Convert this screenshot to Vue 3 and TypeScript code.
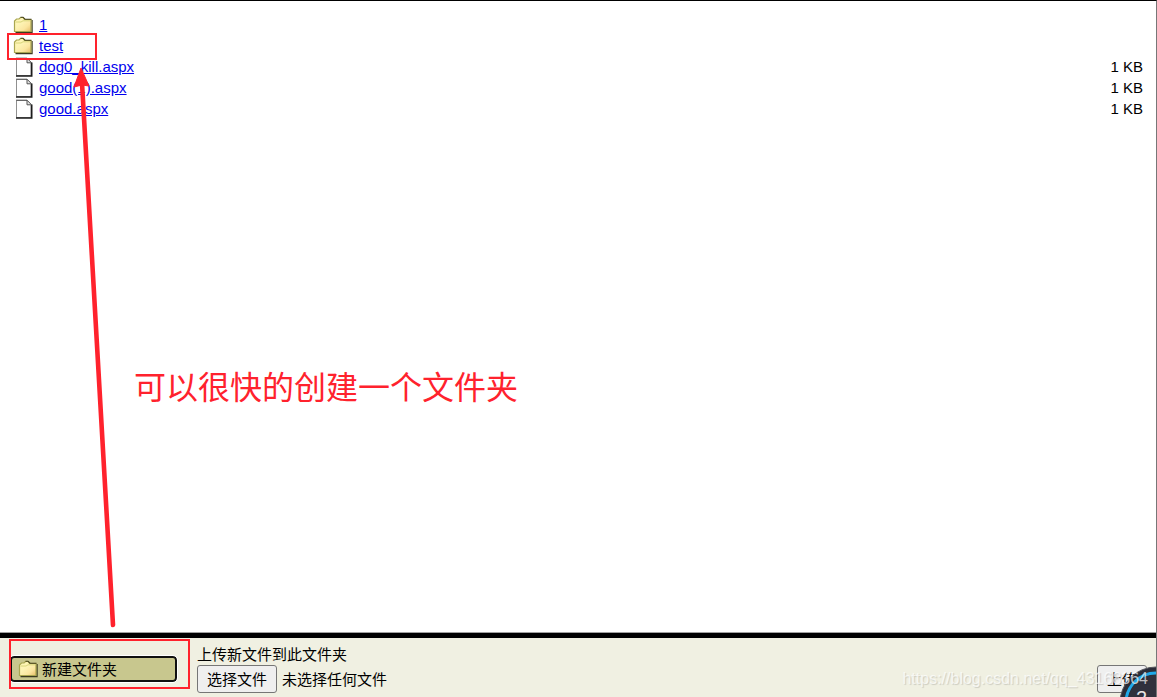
<script setup lang="ts">
import { ref } from 'vue'

interface Entry {
  name: string
  kind: 'folder' | 'file'
  size: string
}

const entries: Entry[] = [
  { name: '1', kind: 'folder', size: '' },
  { name: 'test', kind: 'folder', size: '' },
  { name: 'dog0_kill.aspx', kind: 'file', size: '1 KB' },
  { name: 'good(1).aspx', kind: 'file', size: '1 KB' },
  { name: 'good.aspx', kind: 'file', size: '1 KB' },
]

const chosen = ref('未选择任何文件')

function onPick(event: Event): void {
  const input = event.target as HTMLInputElement
  chosen.value = input.files?.[0]?.name ?? '未选择任何文件'
}
</script>

<template>
  <div class="page">
    <svg class="defs" width="0" height="0" aria-hidden="true">
      <defs>
        <linearGradient id="folderFill" x1="0" y1="0" x2="1" y2="1">
          <stop offset="0" stop-color="#fff8b8" />
          <stop offset="0.4" stop-color="#fdf3b4" />
          <stop offset="0.7" stop-color="#fbe6a0" />
          <stop offset="1" stop-color="#e6bc68" />
        </linearGradient>
        <symbol id="folder" viewBox="0 0 20 18">
          <path d="M2.5 16.5H19V4" fill="none" stroke="#3c3a20" stroke-width="1.4" />
          <path d="M1.5 15.5V5L3.5 3H6L7.5 1.5H10L11.5 3.5H18V15.5Z" fill="url(#folderFill)" stroke="#a9a650" stroke-width="1.2" />
          <path d="M7.5 1.2H10L12 3.2H18.5" fill="none" stroke="#45421c" stroke-width="1.1" />
          <path d="M2.5 6H8L10 4.8H17" fill="none" stroke="#d8d47a" stroke-width="1" />
        </symbol>
        <symbol id="file" viewBox="0 0 20 20">
          <path d="M3.5 18.5V1.5H14L18 5.5V18.5Z" fill="#fff" stroke="#909090" stroke-width="1" />
          <path d="M3 19H18.7V5.5" fill="none" stroke="#1c1c1c" stroke-width="1.6" />
          <path d="M3 1.2H14L18.6 5.8H14V1.2" fill="#e4e4e4" stroke="#555" stroke-width="1" />
        </symbol>
      </defs>
    </svg>

    <main class="listing">
      <table>
        <tbody>
          <tr v-for="entry in entries" :key="entry.name">
            <td class="icon">
              <svg v-if="entry.kind === 'folder'" width="20" height="18" aria-hidden="true"><use href="#folder" /></svg>
              <svg v-else width="20" height="20" aria-hidden="true"><use href="#file" /></svg>
            </td>
            <td><a href="#">{{ entry.name }}</a></td>
            <td class="size">{{ entry.size }}</td>
          </tr>
        </tbody>
      </table>
    </main>

    <footer class="bar">
      <button type="button" class="new-folder">
        <svg width="20" height="18" aria-hidden="true"><use href="#folder" /></svg>
        <span>新建文件夹</span>
      </button>
      <form class="upload" @submit.prevent>
        <div class="caption">上传新文件到此文件夹</div>
        <div class="controls">
          <input id="upload-file" class="file-input" type="file" @change="onPick" />
          <label class="btn" for="upload-file">选择文件</label>
          <span class="chosen">{{ chosen }}</span>
          <button type="submit" class="btn send">上传</button>
        </div>
      </form>
    </footer>

    <div class="mark mark-row"></div>
    <div class="mark mark-button"></div>
    <svg class="arrow" width="60" height="570" viewBox="0 0 60 570" aria-hidden="true">
      <path d="M53 564L22 22" fill="none" stroke="#ff222d" stroke-width="4.6" stroke-linecap="round" />
      <path d="M21 7L14 26L22 24L29 25Z" fill="#ff222d" stroke="#ff222d" stroke-width="1" stroke-linejoin="round" />
    </svg>
    <div class="note">可以很快的创建一个文件夹</div>
    <svg class="badge" width="38" height="32" viewBox="0 0 38 32" aria-hidden="true">
      <circle cx="38" cy="38" r="36" fill="#2c2d38" stroke="#55565e" stroke-width="1" />
      <circle cx="38" cy="38" r="30" fill="none" stroke="#20a8e8" stroke-width="3" />
      <circle cx="38" cy="38" r="28" fill="#30313d" />
      <text x="18" y="40" font-size="20" fill="#e6e6e6">2</text>
    </svg>
    <div class="watermark">https://blog.csdn.net/qq_43168364</div>
  </div>
</template>

<style>
body {
  margin: 0;
}
</style>

<style scoped>
.page {
  position: relative;
  display: flex;
  flex-direction: column;
  box-sizing: border-box;
  height: 100vh;
  overflow: hidden;
  border-top: 1px solid #000;
  border-right: 1px solid #777;
  background: #fff;
  color: #000;
  font: 15px/21px "Liberation Sans", "Noto Sans CJK SC", sans-serif;
}
.defs {
  position: absolute;
}
.listing {
  flex: 1;
  padding: 13px 13px 0;
  border-bottom: 1px solid #a0a0a0;
}
table {
  width: 100%;
  border-collapse: collapse;
}
td {
  height: 21px;
  padding: 0;
}
.icon {
  width: 26px;
}
.icon svg {
  display: block;
}
.size {
  text-align: right;
}
a {
  color: #0000ee;
}
.bar {
  display: flex;
  align-items: flex-start;
  gap: 20px;
  box-sizing: border-box;
  height: 64px;
  padding: 6px 9px 0 10px;
  border-top: 5px solid #000;
  background: #f0f0e2;
}
.new-folder {
  display: flex;
  align-items: center;
  gap: 4px;
  box-sizing: border-box;
  width: 167px;
  height: 26px;
  margin: 12px 0 0;
  padding: 0 6px;
  border: 2px solid #101010;
  border-radius: 4px;
  outline: 1px solid #fff;
  background: #c8c78e;
  color: #000;
  font: inherit;
}
.upload {
  flex: 1;
}
.caption {
  padding-top: 1px;
  line-height: 20px;
}
.controls {
  position: relative;
  display: flex;
  align-items: center;
  gap: 5px;
}
.file-input {
  position: absolute;
  width: 1px;
  height: 1px;
  opacity: 0;
}
.btn {
  box-sizing: border-box;
  height: 28px;
  padding: 0 9px;
  border: 1px solid #767676;
  border-radius: 3px;
  background: #efefef;
  color: #000;
  font: inherit;
  line-height: 27px;
}
.send {
  width: 50px;
  margin-left: auto;
}
.mark {
  position: absolute;
  box-sizing: border-box;
  border: 2px solid #ff222d;
  pointer-events: none;
}
.mark-row {
  left: 7px;
  top: 32px;
  width: 90px;
  height: 27px;
}
.mark-button {
  left: 9px;
  bottom: 8px;
  width: 181px;
  height: 50px;
}
.arrow {
  position: absolute;
  left: 60px;
  top: 60px;
  pointer-events: none;
}
.note {
  position: absolute;
  left: 134px;
  top: 364px;
  color: #ff222d;
  font-size: 32px;
  line-height: 46px;
}
.badge {
  position: absolute;
  right: 0;
  bottom: 0;
}
.watermark {
  position: absolute;
  right: 8px;
  bottom: 8px;
  color: rgba(255, 255, 255, 0.7);
  font-size: 16px;
  text-shadow: 1px 1px 1px rgba(0, 0, 0, 0.15);
  pointer-events: none;
}
</style>
